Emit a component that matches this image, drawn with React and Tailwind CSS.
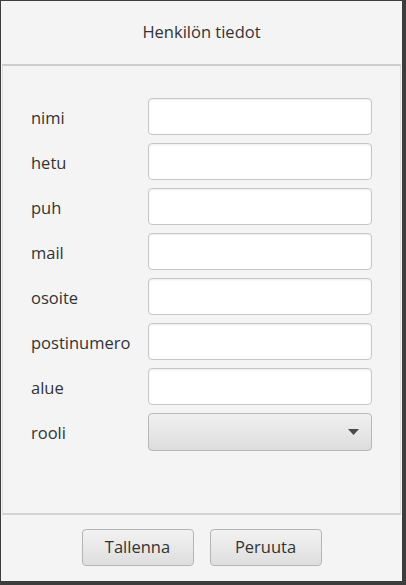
import React from "react";

const fields = ["nimi", "hetu", "puh", "mail", "osoite", "postinumero", "alue"];

export default function App() {
  return (
    <div
      className="w-[406px] h-[585px] bg-[#3d3d3d] pt-px pl-px"
      style={{ fontFamily: '"Open Sans", "Noto Sans", sans-serif' }}
    >
      <div className="w-[401px] h-[580px] bg-[#f4f4f4] flex flex-col text-[#333333]">
        <div className="h-[63px] flex items-center justify-center text-[16.5px]">
          Henkilön tiedot
        </div>
        <div className="h-[451px] mx-px border-t-2 border-b-2 border-x border-t-[#cdcdcd] border-b-[#d2d2d2] border-x-[#dedede] pl-[28px] pt-[32px]">
          <div className="grid grid-cols-[117px_224px] gap-y-[8px]">
            {fields.map((f) => (
              <React.Fragment key={f}>
                <div className="h-[37px] flex items-center text-[16.5px] pt-[3px]">{f}</div>
                <div className="h-[37px] rounded-[4px] border border-[#c6c6c6] bg-white shadow-[inset_0_1px_2px_rgba(0,0,0,0.08)]" />
              </React.Fragment>
            ))}
            <div className="h-[37px] flex items-center text-[16.5px] pt-[3px]">rooli</div>
            <div className="h-[38px] rounded-[4px] border border-[#b8b8b8] bg-gradient-to-b from-[#f0f0f0] to-[#dddddd] flex items-center justify-end pr-[12px]">
              <svg width="11" height="6" viewBox="0 0 11 6">
                <path d="M0 0 L11 0 L5.5 6 Z" fill="#4a4a4a" />
              </svg>
            </div>
          </div>
        </div>
        <div className="flex-1 flex justify-center gap-[16px] pt-[14px]">
          <button className="w-[112px] h-[37px] rounded-[4px] border border-[#b5b5b5] bg-gradient-to-b from-[#f2f2f2] to-[#dedede] text-[16.5px] text-[#333333]">
            Tallenna
          </button>
          <button className="w-[112px] h-[37px] rounded-[4px] border border-[#b5b5b5] bg-gradient-to-b from-[#f2f2f2] to-[#dedede] text-[16.5px] text-[#333333]">
            Peruuta
          </button>
        </div>
      </div>
    </div>
  );
}
